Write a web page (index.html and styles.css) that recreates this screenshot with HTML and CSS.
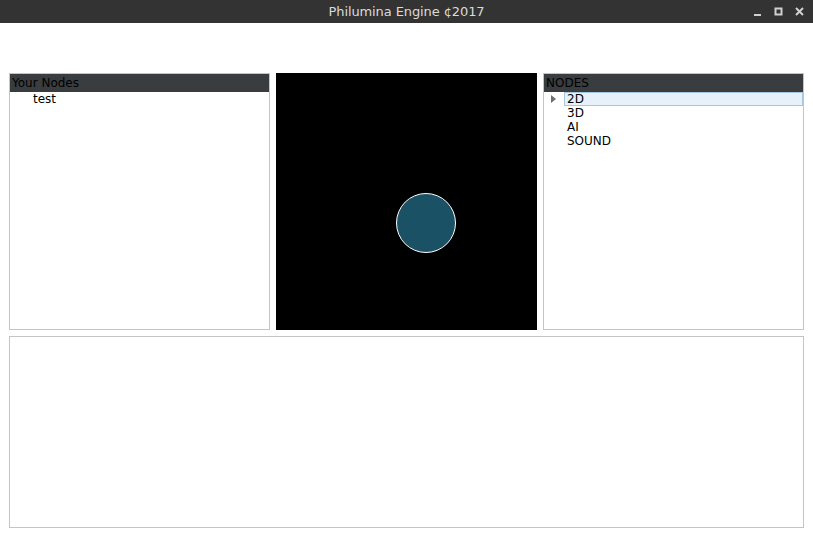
FILE: index.html
```html
<!DOCTYPE html>
<html>
<head>
<meta charset="utf-8">
<link rel="stylesheet" href="styles.css">
</head>
<body>
<div class="titlebar">
  <span class="title">Philumina Engine ¢2017</span>
  <div class="controls">
    <svg width="10" height="10" viewBox="0 0 10 10"><rect x="1" y="7" width="7" height="2" fill="#d0d0d0"/></svg>
    <svg width="10" height="10" viewBox="0 0 10 10"><rect x="1.5" y="1.5" width="6" height="6" fill="none" stroke="#d0d0d0" stroke-width="2"/></svg>
    <svg width="10" height="10" viewBox="0 0 10 10"><path d="M1 1 L8 8 M8 1 L1 8" stroke="#d0d0d0" stroke-width="2"/></svg>
  </div>
</div>
<div class="main">
  <div class="row">
    <div class="panel">
      <div class="header">Your Nodes</div>
      <div class="list">
        <div class="item indent">test</div>
      </div>
    </div>
    <div class="canvas">
      <svg width="261" height="257" viewBox="0 0 261 257">
        <circle cx="150" cy="150" r="29.5" fill="#1b5165" stroke="#ffffff" stroke-width="1"/>
      </svg>
    </div>
    <div class="panel">
      <div class="header">NODES</div>
      <div class="list tree">
        <div class="node selected"><span class="arrow"></span><span class="label">2D</span></div>
        <div class="node"><span class="label">3D</span></div>
        <div class="node"><span class="label">AI</span></div>
        <div class="node"><span class="label">SOUND</span></div>
      </div>
    </div>
  </div>
  <div class="bottom"></div>
</div>
</body>
</html>
```
FILE: styles.css
```css
html, body {
  margin: 0;
  padding: 0;
  background: #ffffff;
  font-family: "DejaVu Sans", sans-serif;
}
.titlebar {
  height: 23px;
  background: #333333;
  display: flex;
  align-items: center;
  justify-content: center;
  position: relative;
}
.title {
  color: #dadada;
  font-size: 13px;
  letter-spacing: -0.1px;
}
.controls {
  position: absolute;
  right: 8px;
  top: 7px;
  display: flex;
  gap: 11px;
}
.main {
  padding: 50px 9px 9px 9px;
  display: flex;
  flex-direction: column;
  gap: 6px;
}
.row {
  display: flex;
  gap: 6px;
  height: 257px;
}
.panel {
  width: 261px;
  box-sizing: border-box;
  border: 1px solid #c4c4c4;
  display: flex;
  flex-direction: column;
}
.header {
  background: #393d3f;
  color: #000000;
  font-size: 12px;
  height: 18px;
  line-height: 19px;
  padding-left: 2px;
  white-space: nowrap;
  overflow: hidden;
}
.list {
  font-size: 12px;
}
.item {
  height: 14px;
  line-height: 14px;
}
.indent {
  padding-left: 23px;
}
.canvas {
  width: 261px;
  height: 257px;
  background: #000000;
}
.canvas svg {
  display: block;
}
.tree .node {
  position: relative;
  height: 14px;
  line-height: 14px;
  padding-left: 20px;
}
.tree .node .label {
  display: block;
  padding-left: 3px;
}
.tree .node.selected .label {
  background: #e6f1fa;
  border: 1px solid #a8c6df;
  height: 12px;
  line-height: 12px;
  padding-left: 2px;
}
.arrow {
  position: absolute;
  left: 7px;
  top: 3px;
  width: 0;
  height: 0;
  border-top: 4px solid transparent;
  border-bottom: 4px solid transparent;
  border-left: 5px solid #6e6e6e;
}
.bottom {
  height: 192px;
  box-sizing: border-box;
  border: 1px solid #c4c4c4;
}
```
